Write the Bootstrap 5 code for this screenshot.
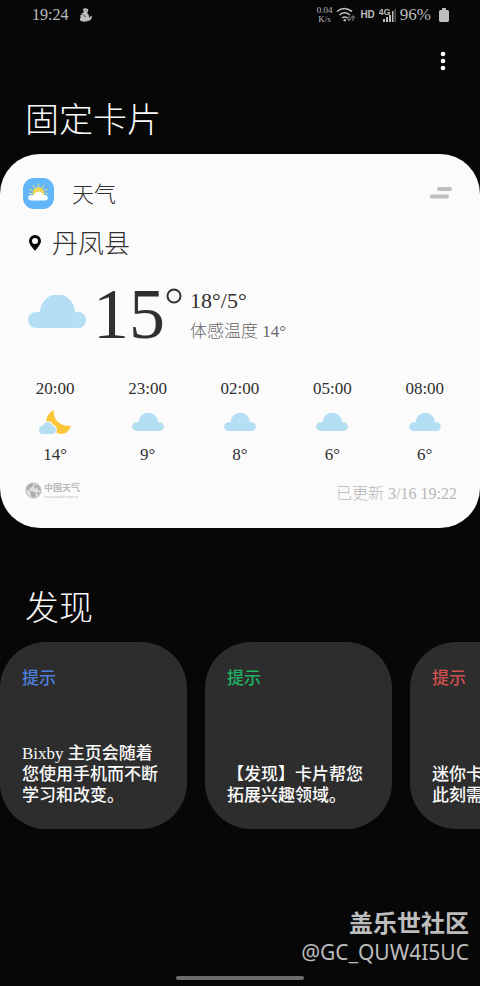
<!DOCTYPE html>
<html lang="zh-CN">
<head>
<meta charset="utf-8">
<meta name="viewport" content="width=device-width, initial-scale=1">
<title>Bixby 主页</title>
<link href="https://cdn.jsdelivr.net/npm/bootstrap@5.3.0/dist/css/bootstrap.min.css" rel="stylesheet">
<style>
body { background: #070707; color: #fafafa; font-family: "Liberation Serif", "Noto Sans CJK SC", serif; font-size: 17px; line-height: 20px; }
svg { display: block; flex: none; }
.status { height: 30px; padding: 0 31px 0 32px; color: #bdbdbd; }
.clock { font-size: 16px; }
.speed { font-size: 9px; line-height: 9px; }
.hd { font: 700 10px/12px "Liberation Sans", sans-serif; }
.menu-bar { height: 61px; padding: 0 30px; }
.heading { font-size: 34px; line-height: 60px; font-weight: 300; padding-left: 25px; margin: 0; }
.weather { background: #fbfbfb; color: #303030; border-radius: 40px; margin-top: 3px; padding-bottom: 22px; }
.weather-top { padding: 23px 27px 0 23px; height: 55px; }
.app-name { font-size: 22px; line-height: 32px; font-weight: 300; margin-left: 18px; }
.place { font-size: 26px; line-height: 32px; font-weight: 300; padding: 0 29px; margin-top: 20px; gap: 11px; }
.current { padding: 0 28px; height: 72px; margin-top: 15px; }
.cloud-now { margin-top: 19px; }
.degrees { font-size: 72px; line-height: 76px; margin-left: 7px; }
.ring { margin: 12px 8px 0 1px; }
.range { font-size: 22px; line-height: 26px; margin-bottom: 6px; }
.feels { line-height: 24px; color: #686868; font-weight: 300; }
.hours { padding: 0 9px; margin-top: 31px; }
.hour-icon { height: 46px; }
.source { padding: 0 23px 0 25px; margin-top: 17px; color: #b8b8b8; }
.brand { gap: 2px; }
.brand-name { font: 700 9px/12px "Noto Sans CJK SC", sans-serif; }
.brand-url { font-size: 4px; line-height: 5px; }
.updated { font-size: 16px; line-height: 24px; font-weight: 300; }
.discover { margin-top: 51px; }
.tiles { gap: 18px; margin-top: 3px; overflow-x: auto; scrollbar-width: none; }
.tiles::-webkit-scrollbar { display: none; }
.tile { flex: none; width: 187px; min-height: 187px; border-radius: 46px; background: #2d2d2d; padding: 27px 22px 23px; font-weight: 500; }
.tile p { margin: 0; color: #fafafa; white-space: nowrap; line-height: 21px; }
.tile h3 { font-size: 17px; line-height: 20px; font-weight: 500; margin: 0; }
.blue { color: #4e80dc; } .green { color: #20b463; } .red { color: #d2504e; }
.credit { padding: 0 11px 9px; color: #bdbdbd; }
.community { font: 700 24px/30px "Noto Sans CJK SC", sans-serif; }
.member { font: 400 21px/30px "Noto Sans", sans-serif; }
.home { display: block; width: 128px; height: 4px; border: 0; padding: 0; border-radius: 2px; background: #6d6d6d; margin: 0 auto 6px; }
</style>
</head>
<body>
<svg width="0" height="0" class="position-absolute" aria-hidden="true"><symbol id="cloud" viewBox="0 0 58 33"><path fill="#b4def3" d="M8 33a8 8 0 0 1 0-16h4a17 17 0 0 1 35 0h3a8 8 0 0 1 0 16z"/></symbol></svg>
<div class="d-flex flex-column min-vh-100">
<header>
<div class="status d-flex align-items-center">
<span class="clock">19:24</span>
<svg class="ms-2 me-auto" width="18" height="14" viewBox="-3 0 18 14"><path fill="#bdbdbd" d="M4 1.500Q5-.5 7.500.5q2.500.5 1.500 3l-1 1.500q2.500 1.500 2 4.500 1.500 0 2-2l1 1q-.5 4-4 4.500-4 1.500-7 0Q-.5 11 2 9.500 0 7 3 6.500L2.500 5 5 4.500z"/><path d="m4 6.500 1 1.500 2 .5M6.500 2.500l1 .5" stroke="#444" fill="none" stroke-width=".8"/></svg>
<span class="speed text-center">0.04<br>K/s</span>
<svg class="ms-1" width="20" height="16" viewBox="0 0 20 16" fill="none" stroke="#bdbdbd" stroke-width="1.600"><path d="M1 4.500q7-6 15 0M3.500 8q5-4.500 10.500 0M6 11q2.500-2 5.500 0"/><circle cx="8.700" cy="13.200" r="1.200" fill="#bdbdbd" stroke="none"/><path stroke="#666" stroke-width="1.300" d="M13 8.500v5m-2-2 2 2 2-2M17 14V9m-2 2 2-2 2 2"/></svg>
<span class="hd ms-1 me-1">HD</span>
<svg width="17" height="16" viewBox="0 0 17 16" fill="#bdbdbd"><text x="-.5" y="8" font-family="Liberation Sans" font-weight="700" font-size="9">4G</text><path d="M4 12h2v3H4zm3-2h2v5H7zm3-2h2v7h-2zm3-4h1.500v11H13z"/><path fill="#555" d="M15.500 2H17v13h-1.500z"/></svg>
<span class="ms-1">96%</span>
<svg class="ms-2" width="10" height="14" viewBox="0 0 10 14" fill="#bdbdbd"><path d="M3 0h4v2h2l1 1v10l-1 1H1l-1-1V3l1-1h2z"/></svg>
</div>
<div class="menu-bar d-flex justify-content-end align-items-center">
<button class="btn p-0 border-0" aria-label="更多选项"><svg width="14" height="22" viewBox="0 0 14 22" fill="#fff"><circle cx="7" cy="4" r="2.300"/><circle cx="7" cy="11" r="2.300"/><circle cx="7" cy="18" r="2.300"/></svg></button>
</div>
</header>
<main>
<h1 class="heading">固定卡片</h1>
<section class="weather">
<div class="weather-top d-flex align-items-center">
<svg width="31" height="31" viewBox="0 0 31 31"><rect width="31" height="31" rx="11" fill="#62b5f8"/><path d="M15.500 5.500v3M10 7l1.500 2.500M21 7l-1.500 2.500M6.500 11l2.500 1.500M24.500 11 22 12.500M6 15.500h3M22.500 15.500h3" stroke="#d9dc85" stroke-width="1.200"/><circle cx="15.500" cy="15" r="6" fill="#efd95a"/><path fill="#fff" d="M8 22.500a2.700 2.700 0 0 1 0-5.500q1.500 0 2.500.5c1-4.500 8-5.500 10-.5 5-.8 6 5.500 1.500 5.500z"/></svg>
<h2 class="app-name mb-0 pt-1">天气</h2>
<button class="btn p-0 border-0 ms-auto" aria-label="卡片选项"><svg width="23" height="12" viewBox="0 0 23 12" fill="none" stroke="#bebebe" stroke-width="4" stroke-linecap="round"><path d="M9 2h11M2 9.500h15"/></svg></button>
</div>
<div class="place d-flex align-items-center">
<svg class="mb-1" width="12" height="16" viewBox="0 0 12 16"><path fill="#050505" fill-rule="evenodd" d="M6 16C4 13 0 9.500 0 6a6 6 0 0 1 12 0c0 3.500-4 7-6 10zM6 3a3 3 0 1 0 0 6 3 3 0 0 0 0-6z"/></svg>
<span>丹凤县</span></div>
<div class="current d-flex">
<svg class="cloud-now" width="58" height="33"><use href="#cloud"/></svg>
<span class="degrees">15</span>
<svg class="ring" width="16" height="16" role="img" aria-label="度"><circle cx="8" cy="8" r="6.500" fill="none" stroke="#303030" stroke-width="2"/></svg>
<div class="pt-2 mt-1"><div class="range">18°/5°</div><div class="feels">体感温度 14°</div></div>
</div>
<div class="hours row row-cols-5 g-0 text-center">
<div class="col"><div>20:00</div><div class="hour-icon d-flex align-items-center justify-content-center"><svg width="32" height="26" viewBox="0 0 32 26"><path fill="#fdc638" d="M15 1q-1 7 3.500 11.500T32 17c-3 8-9 9-14 7L7 13Q8 4 15 1z"/><path fill="#b4def3" stroke="#fbfbfb" stroke-width="2" paint-order="stroke" d="M4 25a4 4 0 0 1 0-8c1-5 8-5 9.500 0 4.500 0 4.500 8 0 8z"/></svg></div><div>14°</div></div>
<div class="col"><div>23:00</div><div class="hour-icon d-flex align-items-center justify-content-center"><svg width="32" height="18"><use href="#cloud"/></svg></div><div>9°</div></div>
<div class="col"><div>02:00</div><div class="hour-icon d-flex align-items-center justify-content-center"><svg width="32" height="18"><use href="#cloud"/></svg></div><div>8°</div></div>
<div class="col"><div>05:00</div><div class="hour-icon d-flex align-items-center justify-content-center"><svg width="32" height="18"><use href="#cloud"/></svg></div><div>6°</div></div>
<div class="col"><div>08:00</div><div class="hour-icon d-flex align-items-center justify-content-center"><svg width="32" height="18"><use href="#cloud"/></svg></div><div>6°</div></div>
</div>
<div class="source d-flex justify-content-between">
<div class="brand d-flex align-items-start"><svg width="17" height="17" viewBox="0 0 17 17"><circle cx="8.500" cy="8.500" r="7.500" fill="#dedede" stroke="#b8b8b8"/><path fill="#aeaeae" d="m2 4 4-3 3 1-2 3-2 1-1 3-3-2zM10 2l4 2 2 5-3-1-1-3-3 2zM5 9l5 1 1 3-2 3-3-2zM12 10h3l-2 4z"/></svg><div><div class="brand-name">中国天气</div><div class="brand-url">www.weather.com.cn</div></div></div>
<span class="updated">已更新 3/16 19:22</span>
</div>
</section>
<section class="discover">
<h1 class="heading">发现</h1>
<div class="tiles d-flex">
<article class="tile d-flex flex-column justify-content-between"><h3 class="blue">提示</h3><p>Bixby 主页会随着<br>您使用手机而不断<br>学习和改变。</p></article>
<article class="tile d-flex flex-column justify-content-between"><h3 class="green">提示</h3><p>【发现】卡片帮您<br>拓展兴趣领域。</p></article>
<article class="tile d-flex flex-column justify-content-between"><h3 class="red">提示</h3><p>迷你卡<br>此刻需</p></article>
</div>
</section>
</main>
<footer class="mt-auto">
<div class="credit text-end"><div class="community">盖乐世社区</div><div class="member">@GC_QUW4I5UC</div></div>
<button class="home" aria-label="主屏幕"></button>
</footer>
</div>
<script src="https://cdn.jsdelivr.net/npm/bootstrap@5.3.0/dist/js/bootstrap.bundle.min.js"></script>
</body>
</html>
